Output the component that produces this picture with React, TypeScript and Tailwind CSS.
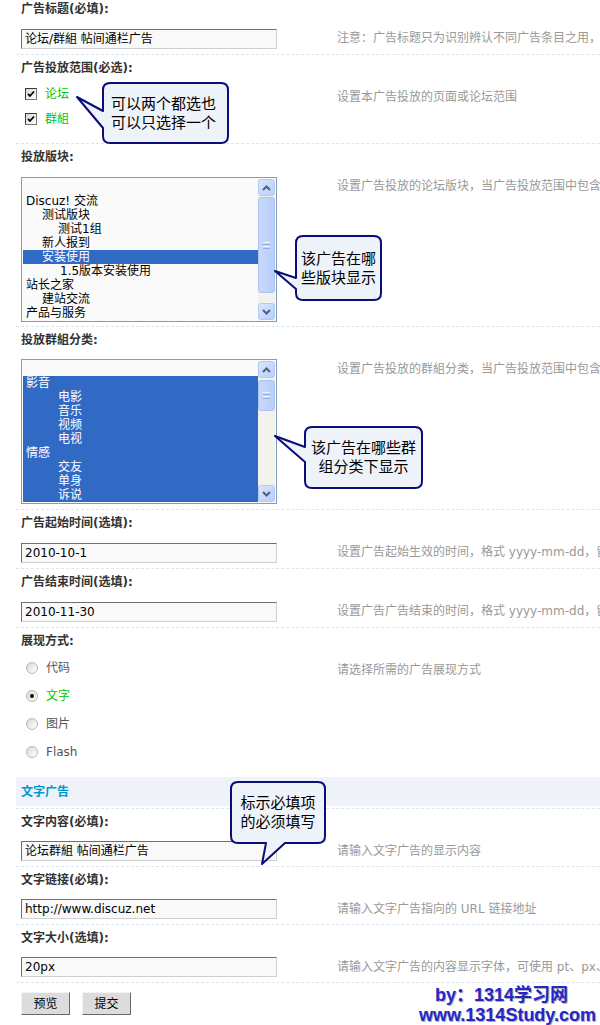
import React from "react";

function Label({ children }: { children: React.ReactNode }) {
  return (
    <div className="h-[26px] flex items-center pl-[5px] text-[12px] font-bold text-[#333]">
      {children}
    </div>
  );
}

function Row({
  h,
  left,
  desc,
  noBorder,
}: {
  h: string;
  left: React.ReactNode;
  desc: string;
  noBorder?: boolean;
}) {
  return (
    <div className={`flex ${h} ${noBorder ? "" : "border-b border-dashed border-[#d6e7f7]"}`}>
      <div className="w-[321px] shrink-0 pl-[5px]">{left}</div>
      <div className="pt-[9px] text-[12px] leading-[14px] text-[#999] whitespace-nowrap">{desc}</div>
    </div>
  );
}

function TextInput({ value, mt }: { value: string; mt: string }) {
  return (
    <div
      className={`${mt} w-[256px] h-[20px] border border-t-[#6f6f6f] border-l-[#6f6f6f] border-r-[#cfcfcf] border-b-[#cfcfcf] bg-[#f9f9f9] pl-[3px] text-[12px] leading-[18px] text-black whitespace-nowrap overflow-hidden`}
    >
      {value}
    </div>
  );
}

function Arrow({ up }: { up?: boolean }) {
  return (
    <svg width="9" height="6" viewBox="0 0 9 6">
      <path
        d={up ? "M1 5 L4.5 1.5 L8 5" : "M1 1 L4.5 4.5 L8 1"}
        fill="none"
        stroke="#4d6185"
        strokeWidth="2"
      />
    </svg>
  );
}

function ScrollBtn({ up }: { up?: boolean }) {
  return (
    <div className="h-[17px] rounded-[3px] border border-[#b5c7f3] bg-linear-to-br from-[#dbe6fe] to-[#b8cdf8] flex items-center justify-center">
      <Arrow up={up} />
    </div>
  );
}

function Scrollbar({ thumbMt, thumbH }: { thumbMt: string; thumbH: string }) {
  return (
    <div className="w-[17px] shrink-0 flex flex-col bg-[#f3f3ee]">
      <ScrollBtn up />
      <div
        className={`${thumbMt} ${thumbH} rounded-[3px] border border-[#adc2f0] bg-linear-to-r from-[#c9d9fc] to-[#b9cdf8] flex flex-col items-center justify-center gap-[1px]`}
      >
        <div className="w-[7px] h-[1px] bg-[#eef4ff]" />
        <div className="w-[7px] h-[1px] bg-[#8fb0ef]" />
        <div className="w-[7px] h-[1px] bg-[#eef4ff]" />
        <div className="w-[7px] h-[1px] bg-[#8fb0ef]" />
      </div>
      <div className="flex-1" />
      <ScrollBtn />
    </div>
  );
}

type Opt = { t: string; pl: string; sel?: boolean };

function ListBox({
  opts,
  mt,
  thumbMt,
  thumbH,
}: {
  opts: Opt[];
  mt: string;
  thumbMt: string;
  thumbH: string;
}) {
  return (
    <div className={`${mt} w-[256px] h-[145px] border border-[#7f9db9] p-[1px] bg-[#fafafa] flex`}>
      <div className="flex-1 pt-[1px] overflow-hidden">
        {opts.map((o, i) => (
          <div
            key={i}
            className={`h-[14px] leading-[14px] text-[12px] whitespace-nowrap ${o.pl} ${
              o.sel ? "bg-[#316ac5] text-white" : "text-black"
            }`}
          >
            {o.t || "\u00a0"}
          </div>
        ))}
      </div>
      <Scrollbar thumbMt={thumbMt} thumbH={thumbH} />
    </div>
  );
}

function Checkbox() {
  return (
    <span className="w-[12px] h-[12px] border border-t-[#3a3a3a] border-l-[#3a3a3a] border-r-[#777] border-b-[#777] bg-linear-to-br from-[#d8d8d0] to-white flex items-center justify-center">
      <svg width="8" height="8" viewBox="0 0 8 8">
        <path d="M1 3.8 L3 6 L7 1.5" fill="none" stroke="#000" strokeWidth="1.8" />
      </svg>
    </span>
  );
}

function Radio({ checked }: { checked?: boolean }) {
  return (
    <span className="w-[12px] h-[12px] rounded-full border border-[#b9b9b2] bg-linear-to-br from-[#dcdcd4] to-white flex items-center justify-center">
      {checked && <span className="w-[4px] h-[4px] rounded-full bg-black" />}
    </span>
  );
}

export default function App() {
  const forums: Opt[] = [
    { t: "", pl: "pl-[3px]" },
    { t: "Discuz! 交流", pl: "pl-[3px]" },
    { t: "测试版块", pl: "pl-[19px]" },
    { t: "测试1组", pl: "pl-[35px]" },
    { t: "新人报到", pl: "pl-[19px]" },
    { t: "安装使用", pl: "pl-[19px]", sel: true },
    { t: "1.5版本安装使用", pl: "pl-[37px]" },
    { t: "站长之家", pl: "pl-[3px]" },
    { t: "建站交流", pl: "pl-[19px]" },
    { t: "产品与服务", pl: "pl-[3px]" },
  ];
  const groups: Opt[] = [
    { t: "", pl: "pl-[3px]" },
    { t: "影音", pl: "pl-[3px]", sel: true },
    { t: "电影", pl: "pl-[35px]", sel: true },
    { t: "音乐", pl: "pl-[35px]", sel: true },
    { t: "视频", pl: "pl-[35px]", sel: true },
    { t: "电视", pl: "pl-[35px]", sel: true },
    { t: "情感", pl: "pl-[3px]", sel: true },
    { t: "交友", pl: "pl-[35px]", sel: true },
    { t: "单身", pl: "pl-[35px]", sel: true },
    { t: "诉说", pl: "pl-[35px]", sel: true },
    { t: "其他", pl: "pl-[35px]", sel: true },
  ];

  return (
    <div className="relative w-[600px] h-[1025px] overflow-hidden bg-white font-['DejaVu_Sans','Noto_Sans_CJK_SC',sans-serif]">
      <div className="-mt-[4px] pl-[16px] w-[1000px]">
        <Label>广告标题(必填):</Label>
        <Row
          h="h-[33px]"
          left={<TextInput mt="mt-[7px]" value="论坛/群組 帖间通栏广告" />}
          desc="注意：广告标题只为识别辨认不同广告条目之用，并不在广告中显示"
        />

        <Label>广告投放范围(必选):</Label>
        <Row
          h="h-[63px]"
          left={
            <ul>
              <li className="h-[25px] flex items-center pl-[4px] gap-[8px]">
                <Checkbox />
                <span className="text-[12px] text-[#00c800]">论坛</span>
              </li>
              <li className="h-[25px] flex items-center pl-[4px] gap-[8px]">
                <Checkbox />
                <span className="text-[12px] text-[#00c800]">群組</span>
              </li>
            </ul>
          }
          desc="设置本广告投放的页面或论坛范围"
        />

        <Label>投放版块:</Label>
        <Row
          h="h-[157px]"
          left={<ListBox opts={forums} mt="mt-[7px]" thumbMt="mt-[1px]" thumbH="h-[96px]" />}
          desc="设置广告投放的论坛版块，当广告投放范围中包含“论坛”时有效"
        />

        <Label>投放群組分类:</Label>
        <Row
          h="h-[157px]"
          left={<ListBox opts={groups} mt="mt-[6px]" thumbMt="mt-[2px]" thumbH="h-[31px]" />}
          desc="设置广告投放的群組分类，当广告投放范围中包含“群組”时有效"
        />

        <Label>广告起始时间(选填):</Label>
        <Row
          h="h-[33px]"
          left={<TextInput mt="mt-[7px]" value="2010-10-1" />}
          desc="设置广告起始生效的时间，格式 yyyy-mm-dd，留空为不限制起始时间"
        />

        <Label>广告结束时间(选填):</Label>
        <Row
          h="h-[33px]"
          left={<TextInput mt="mt-[7px]" value="2010-11-30" />}
          desc="设置广告广告结束的时间，格式 yyyy-mm-dd，留空为不限制结束时间"
        />

        <Label>展现方式:</Label>
        <Row
          h="h-[123px]"
          noBorder
          left={
            <ul>
              <li className="h-[28px] flex items-center pl-[5px] gap-[8px]">
                <Radio />
                <span className="text-[12px] text-[#555]">代码</span>
              </li>
              <li className="h-[28px] flex items-center pl-[5px] gap-[8px]">
                <Radio checked />
                <span className="text-[12px] text-[#00c800]">文字</span>
              </li>
              <li className="h-[28px] flex items-center pl-[5px] gap-[8px]">
                <Radio />
                <span className="text-[12px] text-[#555]">图片</span>
              </li>
              <li className="h-[28px] flex items-center pl-[5px] gap-[8px]">
                <Radio />
                <span className="text-[12px] text-[#555]">Flash</span>
              </li>
            </ul>
          }
          desc="请选择所需的广告展现方式"
        />

        <div className="h-[29px] bg-[#eff3f9] flex items-center pl-[5px] text-[12px] font-bold text-[#0099cc]">
          文字广告
        </div>
        <div className="h-[3px] border-b border-dashed border-[#d6e7f7]" />

        <Label>文字内容(必填):</Label>
        <Row
          h="h-[32px]"
          left={<TextInput mt="mt-[6px]" value="论坛群組 帖间通栏广告" />}
          desc="请输入文字广告的显示内容"
        />

        <Label>文字链接(必填):</Label>
        <Row
          h="h-[32px]"
          left={<TextInput mt="mt-[6px]" value="http://www.discuz.net" />}
          desc="请输入文字广告指向的 URL 链接地址"
        />

        <Label>文字大小(选填):</Label>
        <Row
          h="h-[32px]"
          left={<TextInput mt="mt-[6px]" value="20px" />}
          desc="请输入文字广告的内容显示字体，可使用 pt、px、em 为单位"
        />

        <div className="pt-[9px] pl-[5px] flex gap-[12px]">
          <button className="w-[49px] h-[23px] bg-[#dcdcdc] border border-t-[#f4f4f4] border-l-[#f4f4f4] border-r-[#6a6a6a] border-b-[#6a6a6a] text-[12px] text-black">
            预览
          </button>
          <button className="w-[49px] h-[23px] bg-[#dcdcdc] border border-t-[#f4f4f4] border-l-[#f4f4f4] border-r-[#6a6a6a] border-b-[#6a6a6a] text-[12px] text-black">
            提交
          </button>
        </div>
      </div>

      {/* callout shapes */}
      <svg
        className="absolute left-0 top-0 pointer-events-none"
        width="600"
        height="1025"
        viewBox="0 0 600 1025"
      >
        <g fill="#eef2f9" stroke="#0c0c7a" strokeWidth="2" strokeLinejoin="round">
          <path d="M110,83 H221 Q228,83 228,90 V136 Q228,143 221,143 H110 Q103,143 103,136 V128 L77,97 L103,111 V90 Q103,83 110,83 Z" />
          <path d="M303,236 H374 Q381,236 381,243 V293 Q381,300 374,300 H303 Q296,300 296,293 V289 L275,271 L296,278 V243 Q296,236 303,236 Z" />
          <path d="M312,427 H415 Q422,427 422,434 V481 Q422,488 415,488 H312 Q305,488 305,481 V462 L275,436 L305,447 V434 Q305,427 312,427 Z" />
          <path d="M238,782 H318 Q325,782 325,789 V836 Q325,843 318,843 H285 L262,864 L266,843 H238 Q231,843 231,836 V789 Q231,782 238,782 Z" />
        </g>
      </svg>

      <div className="absolute left-[111px] top-[93px] text-[15px] leading-[19px] text-black font-['Noto_Sans_CJK_SC',sans-serif]">
        <div>可以两个都选也</div>
        <div>可以只选择一个</div>
      </div>
      <div className="absolute left-[296px] w-[85px] top-[248px] text-center text-[15px] leading-[19px] text-black font-['Noto_Sans_CJK_SC',sans-serif]">
        <div>该广告在哪</div>
        <div>些版块显示</div>
      </div>
      <div className="absolute left-[305px] w-[117px] top-[437px] text-center text-[15px] leading-[19px] text-black font-['Noto_Sans_CJK_SC',sans-serif]">
        <div>该广告在哪些群</div>
        <div>组分类下显示</div>
      </div>
      <div className="absolute left-[231px] w-[94px] top-[792px] text-center text-[15px] leading-[19px] text-black font-['Noto_Sans_CJK_SC',sans-serif]">
        <div>标示必填项</div>
        <div>的必须填写</div>
      </div>

      {/* watermark */}
      <div className="absolute left-[435px] top-[985px] text-[18px] leading-[20px] font-bold text-[#2626c8] whitespace-nowrap font-['Liberation_Sans','Noto_Sans_CJK_SC',sans-serif] [text-shadow:1px_1px_0_#b0b0b0]">
        by：1314学习网
      </div>
      <div className="absolute left-[419px] top-[1005px] text-[18px] leading-[20px] font-bold text-[#2626c8] whitespace-nowrap font-['Liberation_Sans','Noto_Sans_CJK_SC',sans-serif] [text-shadow:1px_1px_0_#b0b0b0]">
        www.1314Study.com
      </div>
    </div>
  );
}
